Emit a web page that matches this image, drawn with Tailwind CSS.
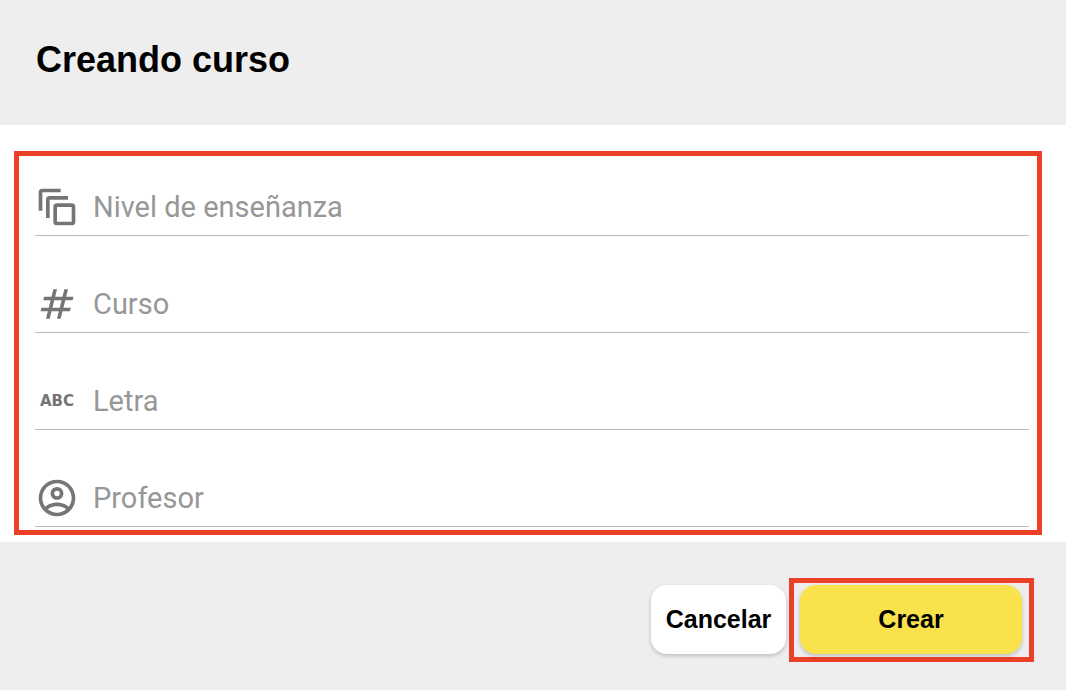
<!DOCTYPE html>
<html lang="es">
<head>
<meta charset="utf-8">
<meta name="viewport" content="width=device-width, initial-scale=1">
<title>Creando curso</title>
<script src="https://cdn.jsdelivr.net/npm/@tailwindcss/browser@4"></script>
</head>
<body class="flex min-h-screen flex-col bg-white font-['Liberation_Sans',Arial,sans-serif] text-black">
<header class="bg-[#eeeeee] px-9 pt-9 pb-[41px]">
  <h1 class="text-[36px] leading-[48px] font-bold">Creando curso</h1>
</header>

<form class="flex grow flex-col">
  <main class="pt-[26px] pr-6 pb-[7px] pl-[14px]">
    <div class="flex flex-col gap-[46px] border-5 border-[#ea4025] pt-[29px] pr-2 pb-[3px] pl-4 font-[Roboto,sans-serif] text-[#757575]">
      <div class="flex items-center gap-[14px] border-b border-[#b9b9b9] pb-[6px]">
        <label for="nivel" class="shrink-0">
          <svg class="size-11" viewBox="0 0 24 24" fill="none" stroke="currentColor" stroke-width="2" role="img" aria-label="Nivel de enseñanza"><path d="M3 14V4a1 1 0 0 1 1-1h10M7 18V8a1 1 0 0 1 1-1h10"/><rect x="11" y="11" width="10" height="10" rx="1"/></svg>
        </label>
        <input id="nivel" type="text" placeholder="Nivel de enseñanza" class="h-11 min-w-0 grow bg-transparent text-[29px] outline-none placeholder:text-[#979797]">
      </div>
      <div class="flex items-center gap-[14px] border-b border-[#b9b9b9] pb-[6px]">
        <label for="curso" class="shrink-0">
          <svg class="size-11" viewBox="0 -960 960 960" fill="currentColor" role="img" aria-label="Curso"><path d="m240-160 40-160H120l20-80h160l40-160H180l20-80h160l40-160h80l-40 160h160l40-160h80l-40 160h160l-20 80H660l-40 160h160l-20 80H600l-40 160h-80l40-160H360l-40 160h-80Zm140-240h160l40-160H420l-40 160Z"/></svg>
        </label>
        <input id="curso" type="text" placeholder="Curso" class="h-11 min-w-0 grow bg-transparent text-[29px] outline-none placeholder:text-[#979797]">
      </div>
      <div class="flex items-center gap-[14px] border-b border-[#b9b9b9] pb-[6px]">
        <label for="letra" class="flex size-11 shrink-0 items-center justify-center font-['DejaVu_Sans',sans-serif] text-[15px] font-bold" aria-label="Letra">ABC</label>
        <input id="letra" type="text" placeholder="Letra" class="h-11 min-w-0 grow bg-transparent text-[29px] outline-none placeholder:text-[#979797]">
      </div>
      <div class="flex items-center gap-[14px] border-b border-[#b9b9b9] pb-[6px]">
        <label for="profesor" class="shrink-0">
          <svg class="size-11" viewBox="0 0 24 24" fill="currentColor" role="img" aria-label="Profesor"><path d="M12,2A10,10 0 0,0 2,12A10,10 0 0,0 12,22A10,10 0 0,0 22,12A10,10 0 0,0 12,2M7.07,18.28C7.5,17.38 10.12,16.5 12,16.5C13.88,16.5 16.5,17.38 16.93,18.28C15.57,19.36 13.86,20 12,20C10.14,20 8.43,19.36 7.07,18.28M18.36,16.83C16.93,15.09 13.46,14.5 12,14.5C10.54,14.5 7.07,15.09 5.64,16.83C4.62,15.5 4,13.82 4,12C4,7.59 7.59,4 12,4C16.41,4 20,7.59 20,12C20,13.82 19.38,15.5 18.36,16.83M12,6C10.06,6 8.5,7.56 8.5,9.5C8.5,11.44 10.06,13 12,13C13.94,13 15.5,11.44 15.5,9.5C15.5,7.56 13.94,6 12,6M12,11A1.5,1.5 0 0,1 10.5,9.5A1.5,1.5 0 0,1 12,8A1.5,1.5 0 0,1 13.5,9.5A1.5,1.5 0 0,1 12,11Z"/></svg>
        </label>
        <input id="profesor" type="text" placeholder="Profesor" class="h-11 min-w-0 grow bg-transparent text-[29px] outline-none placeholder:text-[#979797]">
      </div>
    </div>
  </main>

  <footer class="flex grow items-start justify-end gap-[3px] bg-[#eeeeee] pt-9 pr-8 pb-7">
    <button type="button" class="mt-[7px] h-[69px] w-[135px] rounded-2xl bg-white text-[25px] font-bold shadow-[0_2px_4px_rgba(0,0,0,0.2)]">Cancelar</button>
    <div class="border-5 border-[#ea4025] pt-[2px] pr-[7px] pb-[3px] pl-[6px]">
      <button type="submit" class="block h-[69px] w-[222px] rounded-2xl bg-[#fae24c] text-[25px] font-bold shadow-[0_2px_4px_rgba(0,0,0,0.2)]">Crear</button>
    </div>
  </footer>
</form>
</body>
</html>
